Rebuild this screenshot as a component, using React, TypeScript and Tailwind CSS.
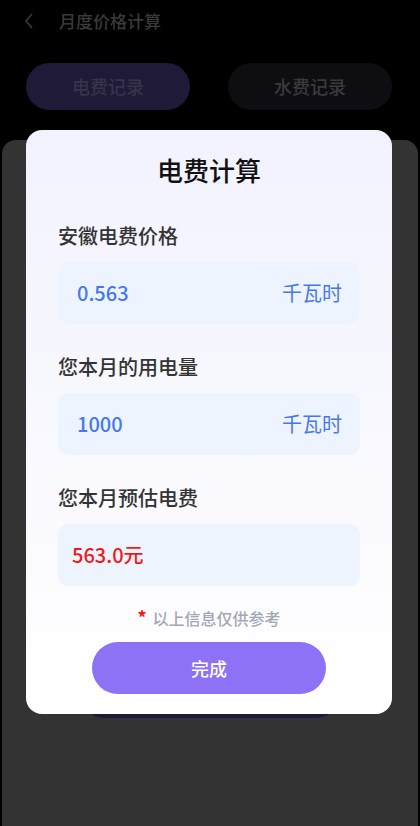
const font = { fontFamily: '"Noto Sans CJK SC", "Noto Sans", sans-serif' };

function Field({ value, unit, danger }: { value: string; unit?: string; danger?: boolean }) {
    return (
        <div
            className={`mt-3 h-[62px] rounded-[10px] bg-[#eef4fe] flex items-center justify-between pr-[18px] ${danger ? 'pl-[14px]' : 'pl-[19px]'}`}
        >
            <span className={`text-[20px] leading-none font-medium ${danger ? 'text-[#f21818]' : 'text-[#4677f0]'}`}>{value}</span>
            {unit && <span className="text-[20px] leading-none text-[#4677f0]">{unit}</span>}
        </div>
    );
}

export default function App() {
    return (
        <div className="relative w-[420px] h-[826px] overflow-hidden bg-black" style={font}>
            {/* page behind the dialog, already dimmed */}
            <div className="flex flex-col h-full">
                <div className="h-[42px] flex items-center pl-[24px]">
                    <svg width="10" height="16" viewBox="0 0 10 16" aria-hidden="true">
                        <polyline points="8,1 2,8 8,15" fill="none" stroke="#3a3a3a" strokeWidth="1.6" />
                    </svg>
                    <span className="ml-[25px] text-[17px] font-medium text-[#3a3a3a]">月度价格计算</span>
                </div>
                <div className="mt-[21px] flex px-[26px] justify-between pr-[28px]">
                    <div className="w-[164px] h-[47px] rounded-full bg-[#1f1a38] flex items-center justify-center text-[18px] font-medium text-[#37334a]">
                        电费记录
                    </div>
                    <div className="w-[164px] h-[47px] rounded-full bg-[#0e0e12] flex items-center justify-center text-[18px] font-medium text-[#3a3a3a]">
                        水费记录
                    </div>
                </div>
                <div className="mt-[30px] mx-[2px] flex-1 rounded-t-[14px] bg-[#333333] flex flex-col items-center">
                    <div className="mt-[530px] w-[260px] h-[48px] rounded-full bg-[#1f1a38]" />
                </div>
            </div>

            {/* dialog */}
            <div className="absolute left-[26px] top-[130px] w-[366px] rounded-[16px] bg-gradient-to-b from-[#f1f2fd] to-white px-[32px] pt-[22px] pb-[20px]">
                <div className="text-center text-[26px] leading-[36px] font-medium text-[#111111]">电费计算</div>

                <div className="mt-[34px] text-[20px] leading-[28px] font-medium text-[#333333]">安徽电费价格</div>
                <Field value="0.563" unit="千瓦时" />

                <div className="mt-[29px] text-[20px] leading-[28px] font-medium text-[#333333]">您本月的用电量</div>
                <Field value="1000" unit="千瓦时" />

                <div className="mt-[29px] text-[20px] leading-[28px] font-medium text-[#333333]">您本月预估电费</div>
                <Field value="563.0元" danger />

                <div className="mt-[20px] text-center text-[16px] leading-[22px] font-medium text-[#a3a7b3]">
                    <span className="text-[#f21818] text-[18px] font-bold mr-[6px]">*</span>以上信息仅供参考
                </div>

                <div className="mt-[13px] mx-auto w-[234px] h-[52px] rounded-full bg-[#8d72f6] flex items-center justify-center text-[18px] font-medium text-white">
                    完成
                </div>
            </div>
        </div>
    );
}
